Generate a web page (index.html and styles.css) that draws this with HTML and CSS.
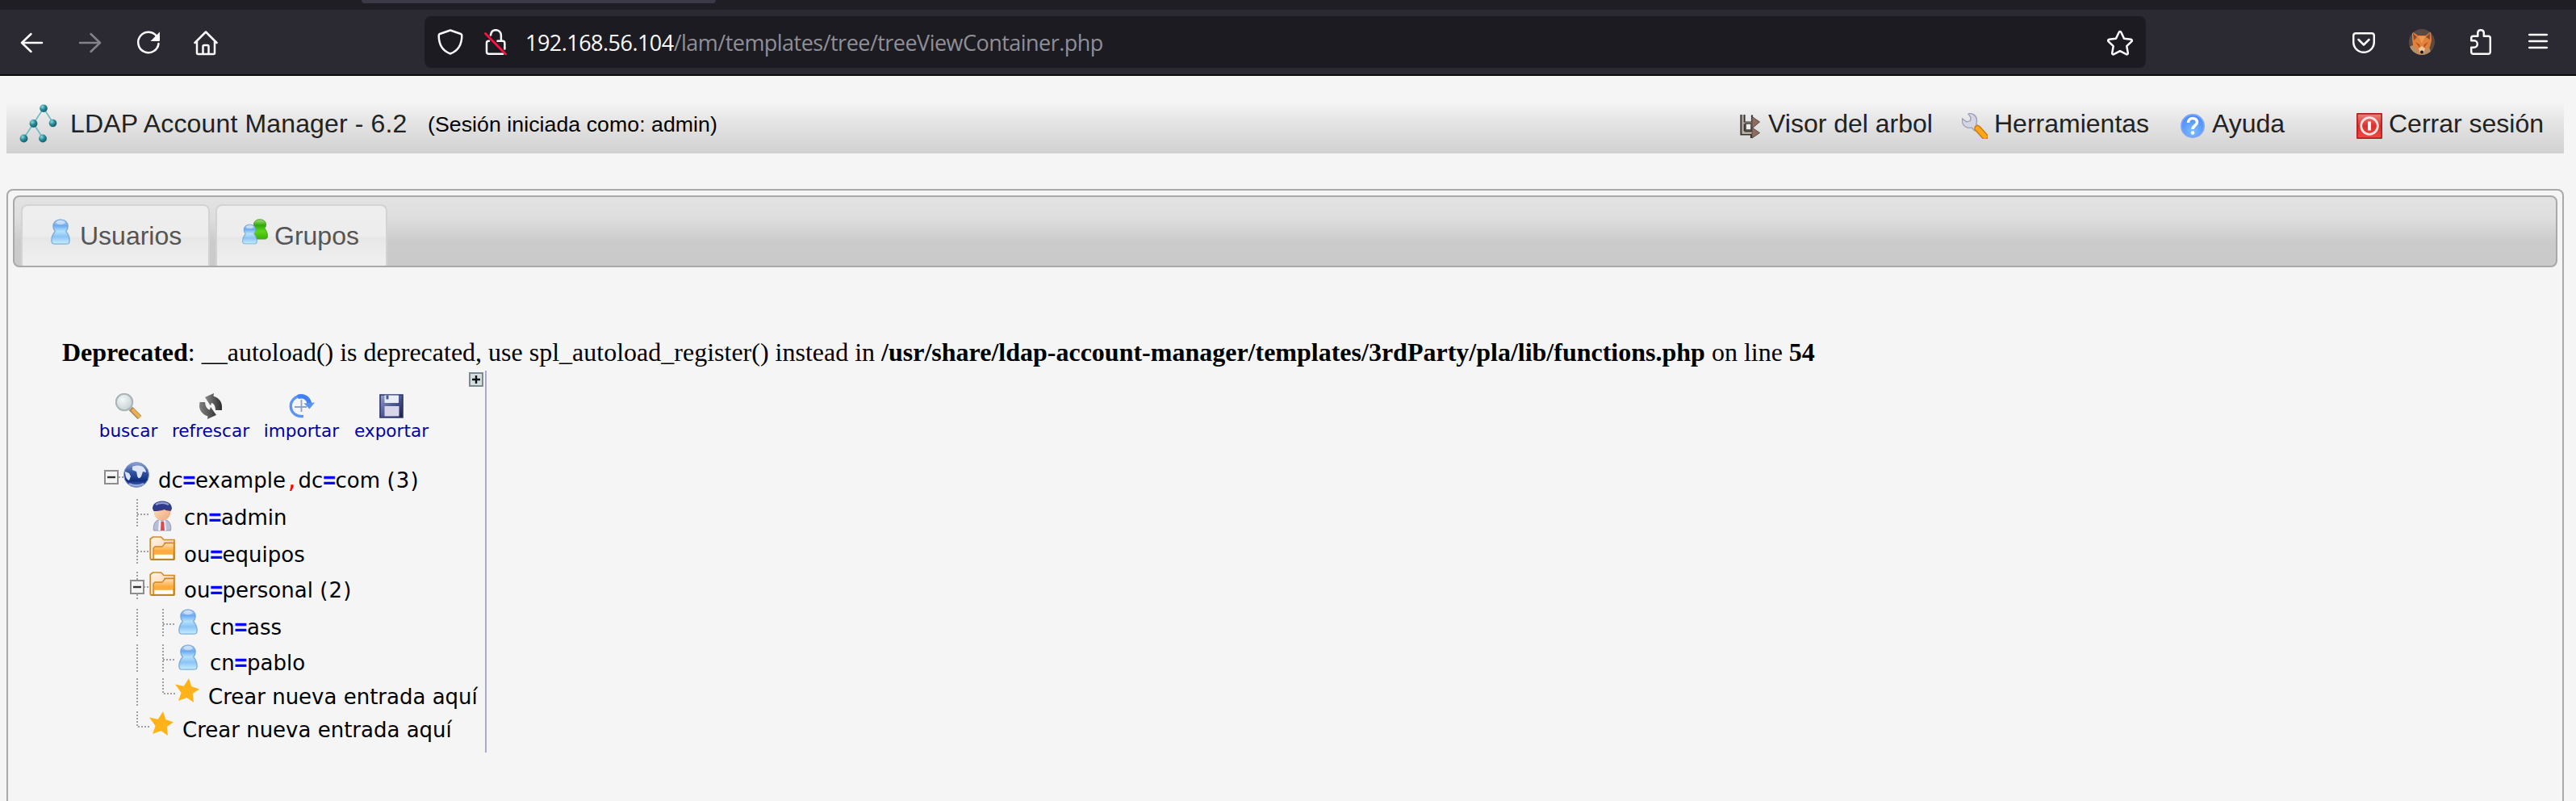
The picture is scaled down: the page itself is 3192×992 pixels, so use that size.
FILE: index.html
```html
<!DOCTYPE html>
<html lang="es">
<head>
<meta charset="utf-8">
<title>LDAP Account Manager</title>
<link rel="stylesheet" href="styles.css">
</head>
<body>
<svg class="defs" aria-hidden="true">
  <defs>
    <linearGradient id="gUser" x1="0" y1="0" x2="0" y2="1"><stop offset="0" stop-color="#c3dcf8"/><stop offset=".25" stop-color="#6daaf0"/><stop offset=".48" stop-color="#b4e2fd"/><stop offset=".7" stop-color="#8cc3f6"/><stop offset="1" stop-color="#c6efff"/></linearGradient>
    <linearGradient id="gGreen" x1="0" y1="0" x2="0" y2="1"><stop offset="0" stop-color="#a5e080"/><stop offset=".3" stop-color="#2fa80a"/><stop offset=".6" stop-color="#5bd716"/><stop offset="1" stop-color="#3fae0d"/></linearGradient>
    <linearGradient id="gBack" x1="0" y1="0" x2="1" y2="1"><stop offset="0" stop-color="#fff5ea"/><stop offset="1" stop-color="#fbc592"/></linearGradient>
    <linearGradient id="gFold" x1="0" y1="0" x2="0" y2="1"><stop offset="0" stop-color="#ffe3bd"/><stop offset=".5" stop-color="#ffab3d"/><stop offset="1" stop-color="#ffb24a"/></linearGradient>
    <radialGradient id="gNode" cx=".35" cy=".3" r=".7"><stop offset="0" stop-color="#8fdbe0"/><stop offset=".5" stop-color="#2a8f9b"/><stop offset="1" stop-color="#15606c"/></radialGradient>
    <radialGradient id="gHelp" cx=".5" cy=".75" r=".7"><stop offset="0" stop-color="#7cc0ff"/><stop offset="1" stop-color="#4b86fb"/></radialGradient>
    <linearGradient id="gGlobe" x1="0" y1="0" x2="0" y2="1"><stop offset="0" stop-color="#8fa6d6"/><stop offset=".4" stop-color="#33539f"/><stop offset=".75" stop-color="#0f2d7c"/><stop offset="1" stop-color="#6c8bcb"/></linearGradient>
    <linearGradient id="gRed" x1="0" y1="0" x2="0" y2="1"><stop offset="0" stop-color="#ea8580"/><stop offset=".5" stop-color="#dc2f2c"/><stop offset="1" stop-color="#f04a48"/></linearGradient>
    <linearGradient id="gDisk" x1="0" y1="0" x2="1" y2="1"><stop offset="0" stop-color="#9aa4ce"/><stop offset=".5" stop-color="#4d5a94"/><stop offset="1" stop-color="#161c48"/></linearGradient>
    <radialGradient id="gLens" cx=".4" cy=".35" r=".7"><stop offset="0" stop-color="#f4f8f8"/><stop offset="1" stop-color="#c3d0d3"/></radialGradient>
    <linearGradient id="gArrow" x1="0" y1="0" x2="1" y2="0"><stop offset="0" stop-color="#8a8a8a"/><stop offset="1" stop-color="#2c2c2c"/></linearGradient>
    <linearGradient id="gArrow2" x1="0" y1="0" x2="1" y2="0"><stop offset="0" stop-color="#808080"/><stop offset="1" stop-color="#3a3a3a"/></linearGradient>
    <linearGradient id="gSkin" x1="0" y1="0" x2="1" y2="1"><stop offset="0" stop-color="#ffe2c8"/><stop offset="1" stop-color="#f0a878"/></linearGradient>
  </defs>
  <symbol id="user" viewBox="0 0 24 32"><path d="M12 .8C6.500.8 2.800 4.500 2.800 9.200c0 2.600.9 4.700 2.500 6.300C2.700 18.500.8 23 .8 27.200c0 2.500 1.700 4 4.200 4h14c2.500 0 4.200-1.500 4.200-4 0-4.200-1.900-8.700-4.500-11.700 1.600-1.600 2.500-3.700 2.500-6.300C21.200 4.500 17.500.8 12 .8z" fill="url(#gUser)" stroke="#6d9fd0" stroke-opacity=".8" stroke-width="1.300"/><ellipse cx="12" cy="4.800" rx="5.500" ry="2.500" fill="#fff" opacity=".45"/></symbol>
  <symbol id="folder" viewBox="0 0 32 30"><path d="M1.200 27V3.500L4.500 1h10l3.500 3.500h13V28c0 1-1 1.200-1.500 1.200H2.800c-1 0-1.600-1-1.600-2.200z" fill="url(#gBack)" stroke="#cf8a2c" stroke-width="1.700"/><path d="M18 8.500h12.500" stroke="#d59a45" stroke-width="1.600"/><path d="M5 28V15l2-2h9l4-4.500h10.500V28z" fill="url(#gFold)" stroke="#cf8424" stroke-width="1.300"/><path d="M6 22.800h23.500v5H6z" fill="#fffdf6"/><path d="M2 29h28.500V21" fill="none" stroke="#a98a28" stroke-width="1.600"/></symbol>
  <symbol id="star" viewBox="0 0 30 30"><path d="M17 0l3.300 10 9.700 3.500-8.300 5.500 1.300 11-8.500-6L4 28l3.600-10L0 7.500l10.800 2.200z" fill="#ffb319"/></symbol>
  <symbol id="minus" viewBox="0 0 18 18"><path d="M1 1h16v16H1z" fill="#f5f5f5" stroke="#8e8e8e" stroke-width="2"/><path d="M4 9h10" stroke="#333" stroke-width="2.400"/></symbol>
</svg>

<div class="tabstrip"><div class="active-tab"></div></div>
<div class="toolbar">
  <svg class="ic back" viewBox="0 0 32 32"><path d="M3 16h25M14.500 5L3 16l11.500 11" class="ln"/></svg>
  <svg class="ic fwd" viewBox="0 0 32 32"><path d="M4 16h25M17.500 5L29 16 17.500 27" class="ln"/></svg>
  <svg class="ic reload" viewBox="0 0 32 32"><path d="M26.500 8.500A12.700 12.700 0 1 0 28.500 17" class="ln"/><path d="M30 2.500v10.500c0 .6-.4 1-1 1H18.500z" fill="#fbfbfe"/></svg>
  <svg class="ic home" viewBox="0 0 32 32"><path d="M2.500 16L16 2.500 29.500 16M5 14v14.500c0 1 .7 1.500 1.500 1.500h19c1 0 1.500-.6 1.500-1.500V14M12.500 30V20.500c0-1 .6-1.500 1.500-1.500h4c1 0 1.500.5 1.500 1.500V30" class="ln"/></svg>
  <div class="urlbar">
    <svg class="ic shield" viewBox="0 0 32 32"><path d="M16 1.500L29 6c.8.300 1.300 1 1.300 2C30.300 19 25.500 27 16 30.500 6.500 27 1.700 19 1.700 8c0-1 .5-1.700 1.300-2z" class="ln"/></svg>
    <svg class="ic lock" viewBox="0 0 28 32"><path d="M8 7.500C8.500 3.500 11 1.200 14.200 1.200c4 0 6.700 2.800 6.700 6.800v6.500M6 14.800H5.500C4 14.800 3 16 3 17.300V28c0 1.700 1 2.800 2.700 2.800h17.500M16.500 14.800h6.200c1.600 0 2.700 1.200 2.700 2.700v7" class="ln"/><path d="M1.500 5.500l25.500 26" stroke="#ff0f3f" stroke-width="2.800" stroke-linecap="round"/></svg>
    <div class="url"><span class="host">192.168.56.104</span>/lam/templates/tree/treeViewContainer.php</div>
    <svg class="ic fav" viewBox="0 0 32 32"><path d="M16 2c.7 0 1.200.5 1.500 1.200L21 10.800l8.300 1c1.500.2 2 1.600 1 2.600l-6 5.800 1.500 8.400c.2 1.300-1 2.200-2.200 1.600L16 26.200l-7.600 4c-1.200.6-2.400-.3-2.200-1.600l1.500-8.400-6-5.800c-1-1-.5-2.400 1-2.600l8.300-1 3.500-7.600C14.800 2.500 15.300 2 16 2z" class="ln"/></svg>
  </div>
  <svg class="ic pocket" viewBox="0 0 28 26"><path d="M4 1.200h20c1.700 0 2.800 1 2.800 2.800v8c0 7.200-5.800 12.800-12.800 12.800S1.200 19.200 1.200 12V4C1.200 2.200 2.300 1.200 4 1.200zM7.500 9l6.500 6.500L20.500 9" class="ln"/></svg>
  <svg class="ic fox" viewBox="0 0 32 32"><clipPath id="cf"><circle cx="16" cy="16" r="16"/></clipPath><g clip-path="url(#cf)"><path d="M0 0h32v32H0z" fill="#5c4a42"/><path d="M0 22l10-4 14 0 4 14H2z" fill="#b98f67"/><path d="M4 3l7 5h10l6-5 1 11-2 8-6 4-3 5h-3l-3-5-6-6-1-8z" fill="#e0813c"/><path d="M5 5l5 5-4 4zM26 5l-5 5 5 3z" fill="#8a4a2c"/><path d="M12 9l4 9 4-9z" fill="#f29b50"/><path d="M8 16l5 3 1 5zM24 16l-5 3-1 5z" fill="#b9481f"/><path d="M12 24l4-3 4 3-2 6h-4z" fill="#ecc79a"/><circle cx="16" cy="28.500" r="2" fill="#1d1514"/></g></svg>
  <svg class="ic puzzle" viewBox="0 0 26 32"><path d="M9.300 8.800V5c0-2.300 1.500-3.800 3.700-3.800S16.800 2.700 16.800 5v3.800h5.500c1.500 0 2.500 1 2.500 2.500v17c0 1.500-1 2.500-2.500 2.500H3.700c-1.500 0-2.500-1-2.500-2.500v-5.500h3.600c2.300 0 4-2 4-4.300s-1.700-4.200-4-4.200H1.200v-3c0-1.500 1-2.500 2.500-2.500z" class="ln"/></svg>
  <svg class="ic menu" viewBox="0 0 24 20"><path d="M1.200 2h21.600M1.200 10h21.600M1.200 18h21.600" class="ln"/></svg>
</div>

<div class="page">
  <div class="header">
    <svg class="logo" viewBox="0 0 48 48"><path d="M30 5L17.500 24M30 5l12 18.500M17.500 24l-12 18M17.500 24L29 42" stroke="#6cbcc6" stroke-width="1.600" fill="none"/><g fill="url(#gNode)"><circle cx="30" cy="5.200" r="4.800"/><circle cx="17.500" cy="24" r="4.900"/><circle cx="41.500" cy="23.500" r="4.800"/><circle cx="5.500" cy="42.500" r="4.900"/><circle cx="29" cy="42.500" r="4.900"/></g></svg>
    <div class="brand">LDAP Account Manager - 6.2</div>
    <div class="session">(Sesión iniciada como: admin)</div>
    <div class="nav">
      <div class="item n1"><svg viewBox="0 0 32 32"><path d="M6.500 2v24.500H20M10.500 2v9.500H20M10.500 22.500V13M20 22.500h-9.500M20 2.500v9M20 17v5M19 26v5" fill="none" stroke="#37342f" stroke-width="2.200"/><path d="M8.500 2v23H19M8.500 12.500h12" fill="none" stroke="#b5a99b" stroke-width="1.800"/><path d="M12 13h7v8h-7z" fill="#ececec" stroke="#45413b" stroke-width="1.600"/><path d="M20 4.500v14.500l9.500-8z" fill="#8e6c5e" stroke="#5b4b44" stroke-width="1"/><path d="M20 18v13l9.500-6.500z" fill="#8e6c5e" stroke="#5b4b44" stroke-width="1"/></svg><span>Visor del arbol</span></div>
      <div class="item n2"><svg viewBox="0 0 32 32"><path d="M8 1c5-1.500 10 2 10.500 7.500.1 2-.3 3.500-.8 5L21 17l-5 5-4-4c-5 1.500-11-2-11.500-7V7l5.500 4 4.500-1.500.5-4z" fill="#d4d6e6" stroke="#9a9db8" stroke-width="1.300"/><path d="M19.500 19l9 10" stroke="#cf7808" stroke-width="8.500" stroke-linecap="round"/><path d="M19.500 19l9 10" stroke="#ffa81f" stroke-width="5.500" stroke-linecap="round"/></svg><span>Herramientas</span></div>
      <div class="item n3"><svg viewBox="0 0 32 32"><circle cx="16" cy="16" r="14" fill="url(#gHelp)" stroke="#7da5f7" stroke-width="2"/><path d="M10.500 12c0-3.500 2.300-5.500 5.500-5.500s5.500 2 5.500 5c0 4-5.500 4-5.500 8.500" fill="none" stroke="#fff" stroke-width="3.600"/><circle cx="16" cy="24.500" r="2.200" fill="#fff"/></svg><span>Ayuda</span></div>
      <div class="item n4"><svg viewBox="0 0 32 32"><rect x=".8" y=".8" width="30.400" height="30.400" rx="1" fill="url(#gRed)" stroke="#b3201f" stroke-width="1.800"/><circle cx="16" cy="16" r="10.300" fill="none" stroke="#fbe3e2" stroke-width="2.800"/><path d="M16 10.500v11" stroke="#fff" stroke-width="3.800"/></svg><span>Cerrar sesión</span></div>
    </div>
  </div>

  <div class="panel">
    <div class="tabs">
      <div class="tab t1"><svg class="u" viewBox="0 0 24 32"><use href="#user"/></svg><span>Usuarios</span></div>
      <div class="tab t2"><svg class="g" viewBox="0 0 32 32"><path d="M22 .8c-4.500 0-7.500 2.700-7.500 6.400 0 2 .7 3.300 1.800 4.500C14.200 14 13 17 13 20c0 3.500 1.500 5 4 5h11c2.500 0 3.500-1.500 3.500-3.500 0-3.800-1.500-7.300-3.700-9.800 1.200-1.200 1.800-2.500 1.800-4.500 0-3.700-3-6.400-7.600-6.400z" fill="url(#gGreen)" stroke="#48a020"/><svg x="0" y="6" width="19" height="26" viewBox="0 0 24 32"><use href="#user"/></svg></svg><span>Grupos</span></div>
    </div>
    <div class="notice"><b>Deprecated</b>: __autoload() is deprecated, use spl_autoload_register() instead in <b>/usr/share/ldap-account-manager/templates/3rdParty/pla/lib/functions.php</b> on line <b>54</b></div>
    <div class="tree-pane">
      <svg class="expand" viewBox="0 0 18 18"><path d="M1 1h16v16H1z" fill="#d5dfe3" stroke="#7b8b90" stroke-width="2"/><path d="M4 9h10M9 4v10" stroke="#111" stroke-width="2.400"/></svg>
      <div class="actions">
        <div class="act a1"><svg viewBox="0 0 32 32"><path d="M19 19l11 11" stroke="#a98a64" stroke-width="6.500"/><path d="M21 20l9.500 10" stroke="#edb04e" stroke-width="4"/><circle cx="11" cy="11" r="10.200" fill="url(#gLens)" stroke="#a9b2b4" stroke-width="2"/></svg><span>buscar</span></div>
        <div class="act a2"><svg viewBox="0 0 32 32"><path d="M9 5L20 0l-.5 3.500C26 5.500 30 10.500 30 16.500V21h-8c0-5-2-8.500-5-9l-1 3.500z" fill="url(#gArrow)"/><path d="M23 27l-11 5 .5-3.500C6 26.500 2 21.500 2 15.500L2.500 11H9c.5 5 2.500 9 6 9.500l1-3.500z" fill="url(#gArrow2)"/></svg><span>refrescar</span></div>
        <div class="act a3"><svg viewBox="0 0 32 32"><path d="M18 28.500C9 29.500 2.300 24 2.300 16 2.300 9 8 3.500 15 3.500" fill="none" stroke="#5c94f6" stroke-width="3.400"/><path d="M11 4.500C19 2 24.500 7 25.500 13" fill="none" stroke="#3f80f6" stroke-width="5.500"/><path d="M18.500 12.500L32 11.500l-6.500 8z" fill="#5a94f0"/><path d="M7 17h15M15.500 8v15" stroke="#8ba3cc" stroke-width="1.800"/></svg><span>importar</span></div>
        <div class="act a4"><svg viewBox="0 0 32 32"><path d="M2 2h28v28H2z" fill="url(#gDisk)" stroke="#2b3468" stroke-width="1.600"/><path d="M7.500 2.500h17.500v9.500H7.500z" fill="#e8edf8"/><path d="M9.500 2.500h3v5h-3z" fill="#4c5890"/><path d="M7.500 16h18v12.500h-18z" fill="#d8d5ea"/></svg><span>exportar</span></div>
      </div>
      <div class="tree">
        <div class="row r46 lv0"><svg class="twig0" viewBox="0 0 24 34"><path d="M18 19h6" class="dot"/><use href="#minus" x="0" y="10" width="18" height="18"/></svg><svg class="globe" viewBox="0 0 32 32"><circle cx="16" cy="16" r="15.500" fill="url(#gGlobe)" stroke="#7f95c8"/><path d="M11 6c4-2 9-2 13 0 2 2 4 4 4 7l-4-1-2 6c-2 3-4 3-5-1l-1-5-5-2zM2 12l5 2 2 4-2 5c-3-1-5-5-5-11z" fill="#dce5f5"/><path d="M7 27c5 3 13 3 18 0" stroke="#9db4e2" stroke-width="2" fill="none"/></svg><span class="txt">dc<b>=</b>example<i>,</i>dc<b>=</b>com <em>(3)</em></span></div>
        <div class="row r46"><svg class="twig" viewBox="0 0 24 34"><path d="M9 0v34M9 19h15" class="dot"/></svg><svg class="admin" viewBox="0 0 32 38"><path d="M5.500 37C4.500 31 6.500 25.500 11 24h10c4.500 1.500 6.500 7 5.500 13z" fill="#b9bdd6" stroke="#9297b4"/><path d="M12 23l4 4 4-4 1 14H11z" fill="#eceefa"/><path d="M14.500 26h3.500l1 11h-5z" fill="#e04848"/><circle cx="16" cy="14" r="10.500" fill="url(#gSkin)"/><path d="M4 10C4 4 9 .5 16 .5S28 4 28 10l-1.500 3c-4-.5-6-1-8-2-3 1.500-8 2-13 2z" fill="#303c8a"/><path d="M8 5c4-3 12-3 16 0" stroke="#8d9bd2" stroke-width="2.500" fill="none"/></svg><span class="txt">cn<b>=</b>admin</span></div>
        <div class="row r44"><svg class="twig" viewBox="0 0 24 34"><path d="M9 0v34M9 19h15" class="dot"/></svg><svg class="folder" viewBox="0 0 32 30"><use href="#folder"/></svg><span class="txt">ou<b>=</b>equipos</span></div>
        <div class="row r46"><svg class="twig" viewBox="0 0 24 34"><path d="M9 0v34M9 19h15" class="dot"/><use href="#minus" x="0" y="10" width="18" height="18"/></svg><svg class="folder" viewBox="0 0 32 30"><use href="#folder"/></svg><span class="txt">ou<b>=</b>personal <em>(2)</em></span></div>
        <div class="row r44"><svg class="twig2" viewBox="0 0 56 34"><path d="M9 0v34M41 0v34M41 19h15" class="dot"/></svg><svg class="person" viewBox="0 0 24 32"><use href="#user"/></svg><span class="txt">cn<b>=</b>ass</span></div>
        <div class="row r42"><svg class="twig2" viewBox="0 0 56 34"><path d="M9 0v34M41 0v34M41 19h15" class="dot"/></svg><svg class="person" viewBox="0 0 24 32"><use href="#user"/></svg><span class="txt">cn<b>=</b>pablo</span></div>
        <div class="row r41"><svg class="twig2" viewBox="0 0 56 34"><path d="M9 0v34M41 0v19h15" class="dot"/></svg><svg class="star" viewBox="0 0 30 30"><use href="#star"/></svg><span class="txt new">Crear nueva entrada aquí</span></div>
        <div class="row r41"><svg class="twig" viewBox="0 0 24 34"><path d="M9 0v19h15" class="dot"/></svg><svg class="star" viewBox="0 0 30 30"><use href="#star"/></svg><span class="txt new">Crear nueva entrada aquí</span></div>
      </div>
    </div>
  </div>
</div>
</body>
</html>
```
FILE: styles.css
```css
* { box-sizing: border-box; }
body { margin: 0; width: 3192px; height: 992px; overflow: hidden; background: #f5f5f5; color: #000; font-family: "Liberation Sans", Arial, sans-serif; white-space: nowrap; }
svg { display: block; flex: none; }
.defs { position: absolute; width: 0; height: 0; }

/* browser chrome */
.tabstrip { height: 12px; background: #201e25; }
.active-tab { width: 439px; height: 4px; margin-left: 448px; background: #3c3a46; border-radius: 0 0 6px 6px; }
.toolbar { height: 82px; display: flex; align-items: flex-start; background: #2b2a33; border-bottom: 2px solid #0c0c0d; }
.ln { fill: none; stroke: #fbfbfe; stroke-width: 2.5; stroke-linecap: round; stroke-linejoin: round; }
.back, .fwd, .reload, .home { width: 32px; height: 32px; margin-top: 25px; }
.back { margin-left: 24px; }
.fwd { margin-left: 39px; opacity: .42; }
.reload { margin-left: 41px; }
.home { margin-left: 39px; }
.urlbar { width: 2133px; height: 64px; margin: 8px 0 0 255px; padding-left: 16px; display: flex; background: #1c1b22; border-radius: 8px; }
.shield { width: 32px; height: 32px; margin-top: 16px; }
.lock { width: 28px; height: 32px; margin: 16px 0 0 26px; }
.url { width: 1959px; margin-left: 23px; font: 27px/66px "Open Sans", "Noto Sans", sans-serif; letter-spacing: -.53px; color: #8f8f96; }
.host { color: #fbfbfe; }
.fav { width: 32px; height: 32px; margin: 17px 0 0 1px; }
.pocket { width: 28px; height: 26px; margin: 28px 0 0 256px; }
.fox { width: 32px; height: 32px; margin: 24px 0 0 42px; }
.puzzle { width: 26px; height: 32px; margin: 24px 0 0 44px; }
.menu { width: 24px; height: 20px; margin: 29px 0 0 46px; }

/* application header */
.page { padding: 32px 15px 0 8px; }
.header { height: 64px; display: flex; background: linear-gradient(#f5f5f5, #e2e2e2 45%, #d1d1d1); color: #222; font-size: 32px; line-height: 54px; }
.logo { width: 48px; height: 48px; margin: 3px 0 0 16px; }
.brand { width: 443px; margin-left: 15px; letter-spacing: .14px; }
.session { font-size: 26.7px; line-height: 57px; letter-spacing: .05px; color: #000; }
.nav { display: flex; margin-left: auto; }
.item { display: flex; }
.item svg { width: 32px; height: 32px; margin: 14px 8px 0 0; }
.n1 { width: 280px; }
.n2 { width: 270px; }
.n3 { width: 219px; }
.n4 { width: 257px; }

/* main panel and tabs */
.panel { height: 800px; margin-top: 44px; padding: 6px; border: 2px solid #a9a9a9; border-radius: 8px; }
.tabs { height: 89px; padding: 9px 8px 0; display: flex; gap: 7px; border: 2px solid #a9a9a9; border-radius: 8px; background: linear-gradient(#e3e3e3, #dedede 30%, #cbcbcb 65%, #cacaca); color: #555; font-size: 32px; line-height: 74px; }
.tab { height: 76px; display: flex; border: 2px solid #d3d3d3; border-bottom: 0; border-radius: 8px 8px 0 0; background: linear-gradient(#eee, #ededed 50%, #e7e7e7 53%, #eee 88%, #efefef); }
.t1 { width: 234px; }
.t2 { width: 213px; }
.u { width: 26px; height: 32px; margin: 16px 11px 0 34px; }
.g { width: 32px; height: 32px; margin: 16px 8px 0 31px; }

/* content */
.notice { margin: 85px 0 0 61px; height: 43px; font: 32px/41px "Liberation Serif", "Times New Roman", serif; }
.tree-pane { width: 525px; height: 473px; margin-left: 62px; border-right: 2px solid #aaaacc; font-family: "DejaVu Sans", Verdana, sans-serif; }
.expand { width: 18px; height: 18px; margin-left: 503px; position: relative; top: 2px; }
.actions { display: flex; padding: 10px 0 0 45px; height: 95px; color: #0000aa; font-size: 21.6px; }
.act { display: flex; flex-direction: column; align-items: center; line-height: 28px; }
.act svg { width: 32px; height: 32px; margin-bottom: 1px; }
.a1 { width: 72px; }
.a2 { width: 98px; margin-left: 17px; }
.a3 { width: 95px; margin-left: 16px; }
.a4 { width: 94px; margin-left: 17px; }
.row { display: flex; padding-left: 83px; font-size: 26px; line-height: 46px; }
.lv0 { padding-left: 51px; }
.r46 { height: 46px; }
.r44 { height: 44px; }
.r42 { height: 42px; }
.r41 { height: 41px; }
.dot { fill: none; stroke: #a0a0a0; stroke-width: 2; stroke-dasharray: 2 2; }
.twig0, .twig { width: 24px; height: 34px; }
.twig2 { width: 56px; height: 34px; }
.globe { width: 32px; height: 32px; margin-right: 11px; }
.admin { width: 32px; height: 38px; margin: 2px 11px 0 0; }
.folder { width: 32px; height: 30px; margin-right: 11px; }
.person { width: 24px; height: 32px; margin: 0 15px 0 4px; }
.star { width: 30px; height: 30px; margin-right: 11px; }
.txt b { color: #00f; font-family: "Liberation Sans", Arial, sans-serif; font-weight: 700; -webkit-text-stroke: .6px #00f; }
.txt i { color: #f00; font-style: normal; font-family: "DejaVu Sans Mono", monospace; }
.txt em { font-style: normal; letter-spacing: 1.2px; }
```
